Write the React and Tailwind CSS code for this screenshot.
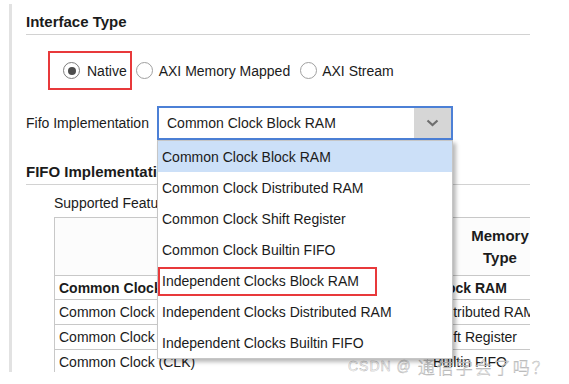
import React from "react";

function Radio({ checked }) {
  return (
    <span
      className={
        "flex h-[17px] w-[17px] shrink-0 items-center justify-center rounded-full border bg-white " +
        (checked ? "border-[#7d7d7d]" : "border-[#a0a0a0]")
      }
    >
      {checked && <span className="h-[8px] w-[8px] rounded-full bg-[#4d4d4d]" />}
    </span>
  );
}

const items = [
  "Common Clock Block RAM",
  "Common Clock Distributed RAM",
  "Common Clock Shift Register",
  "Common Clock Builtin FIFO",
  "Independent Clocks Block RAM",
  "Independent Clocks Distributed RAM",
  "Independent Clocks Builtin FIFO",
];

const rows = [
  ["Common Clock (CLK)", "Block RAM", true, "h-[24px]"],
  ["Common Clock (CLK)", "Distributed RAM", false, "h-[25px]"],
  ["Common Clock (CLK)", "Shift Register", false, "h-[25px]"],
  ["Common Clock (CLK)", "Builtin FIFO", false, "h-[25px]"],
];

export default function App() {
  return (
    <div className="relative h-[384px] w-[569px] overflow-hidden bg-white pt-[4px] font-['Liberation_Sans',Arial,sans-serif] text-[14px] text-[#1b1b1b]">
      <div className="ml-[9px] h-[368px] w-[521px] overflow-hidden border-l-[3px] border-[#e2e2e2] pl-[14px]">
        {/* Interface Type */}
        <div className="border-b border-[#d2d2d2] pb-[3px] pt-[9px] text-[15px] font-bold leading-[18px]">
          Interface Type
        </div>

        <div className="mt-[16px] flex h-[39px] items-center">
          <div className="ml-[22px] flex h-[39px] items-center border-2 border-[#e8393b] pl-[13px] pr-[3px]">
            <Radio checked />
            <span className="ml-[7px] leading-[18px]">Native</span>
          </div>
          <span className="ml-[4px]">
            <Radio />
          </span>
          <span className="ml-[6px] leading-[18px]">AXI Memory Mapped</span>
          <span className="ml-[10px]">
            <Radio />
          </span>
          <span className="ml-[5px] leading-[18px]">AXI Stream</span>
        </div>

        {/* Fifo Implementation select */}
        <div className="mt-[16px] flex items-center">
          <span className="w-[131px] leading-[18px]">Fifo Implementation</span>
          <div className="relative z-10">
            <div className="flex h-[34px] w-[296px] items-center border-2 border-[#4c80d6] bg-white">
              <span className="flex-1 pl-[8px] leading-[18px]">Common Clock Block RAM</span>
              <span className="flex h-full w-[37px] items-center justify-center bg-[#d6d6d6]">
                <svg width="13" height="8" viewBox="0 0 13 8">
                  <path d="M1.5 1.5 L6.5 6 L11.5 1.5" fill="none" stroke="#6e6e6e" strokeWidth="2.2" />
                </svg>
              </span>
            </div>
            <div className="absolute left-0 top-full w-[296px] border border-[#c6c6c6] bg-white shadow-[3px_3px_4px_rgba(0,0,0,0.28)]">
              {items.map((t, i) => (
                <div
                  key={t}
                  className={
                    "relative flex h-[31px] items-center pl-[4px] leading-[18px] " +
                    (i === 0 ? "bg-[#cce0f8]" : "")
                  }
                >
                  {t}
                  {i === 4 && (
                    <span className="absolute left-0 top-[2px] h-[29px] w-[219px] border-2 border-[#e8393b]" />
                  )}
                </div>
              ))}
            </div>
          </div>
        </div>

        {/* FIFO Implementation Options */}
        <div className="mt-[23px] border-b border-[#d2d2d2] pb-[3px] text-[15px] font-bold leading-[18px]">
          FIFO Implementation Options
        </div>

        <div className="ml-[28px] mt-[9px] leading-[18px]">Supported Features</div>

        <div className="ml-[28px] mt-[5px] w-[476px] overflow-hidden">
          <div className="w-[517px] border-l border-t border-[#c8c8c8]">
            <div className="grid h-[58px] grid-cols-[372px_145px] border-b border-[#c8c8c8] bg-[#fcfcfc]">
              <div />
              <div className="flex flex-col items-center justify-center border-l border-[#c8c8c8] text-[15px] font-bold leading-[22px]">
                <span>Memory</span>
                <span>Type</span>
              </div>
            </div>
            {rows.map(([a, b, bold, h], i) => (
              <div
                key={i}
                className={"grid grid-cols-[372px_145px] border-b border-[#c8c8c8] " + h + (bold ? " font-bold" : "")}
              >
                <div className="flex items-center pl-[4px] leading-[18px]">{a}</div>
                <div className="flex items-center border-l border-[#c8c8c8] pl-[5px] leading-[18px]">{b}</div>
              </div>
            ))}
          </div>
        </div>
      </div>

      {/* watermark */}
      <div className="pointer-events-none absolute left-[348px] top-[354px] flex items-center whitespace-nowrap font-['Liberation_Sans','Noto_Sans_CJK_SC',sans-serif] text-white/70 [-webkit-text-stroke:0.45px_#b0b0b0]">
        <span className="text-[14px] tracking-[1px]">CSDN @</span>
        <span className="ml-[6px] font-['Noto_Sans_CJK_SC',sans-serif] text-[17px] font-light tracking-[2px]">通信学会了吗？</span>
      </div>
    </div>
  );
}
